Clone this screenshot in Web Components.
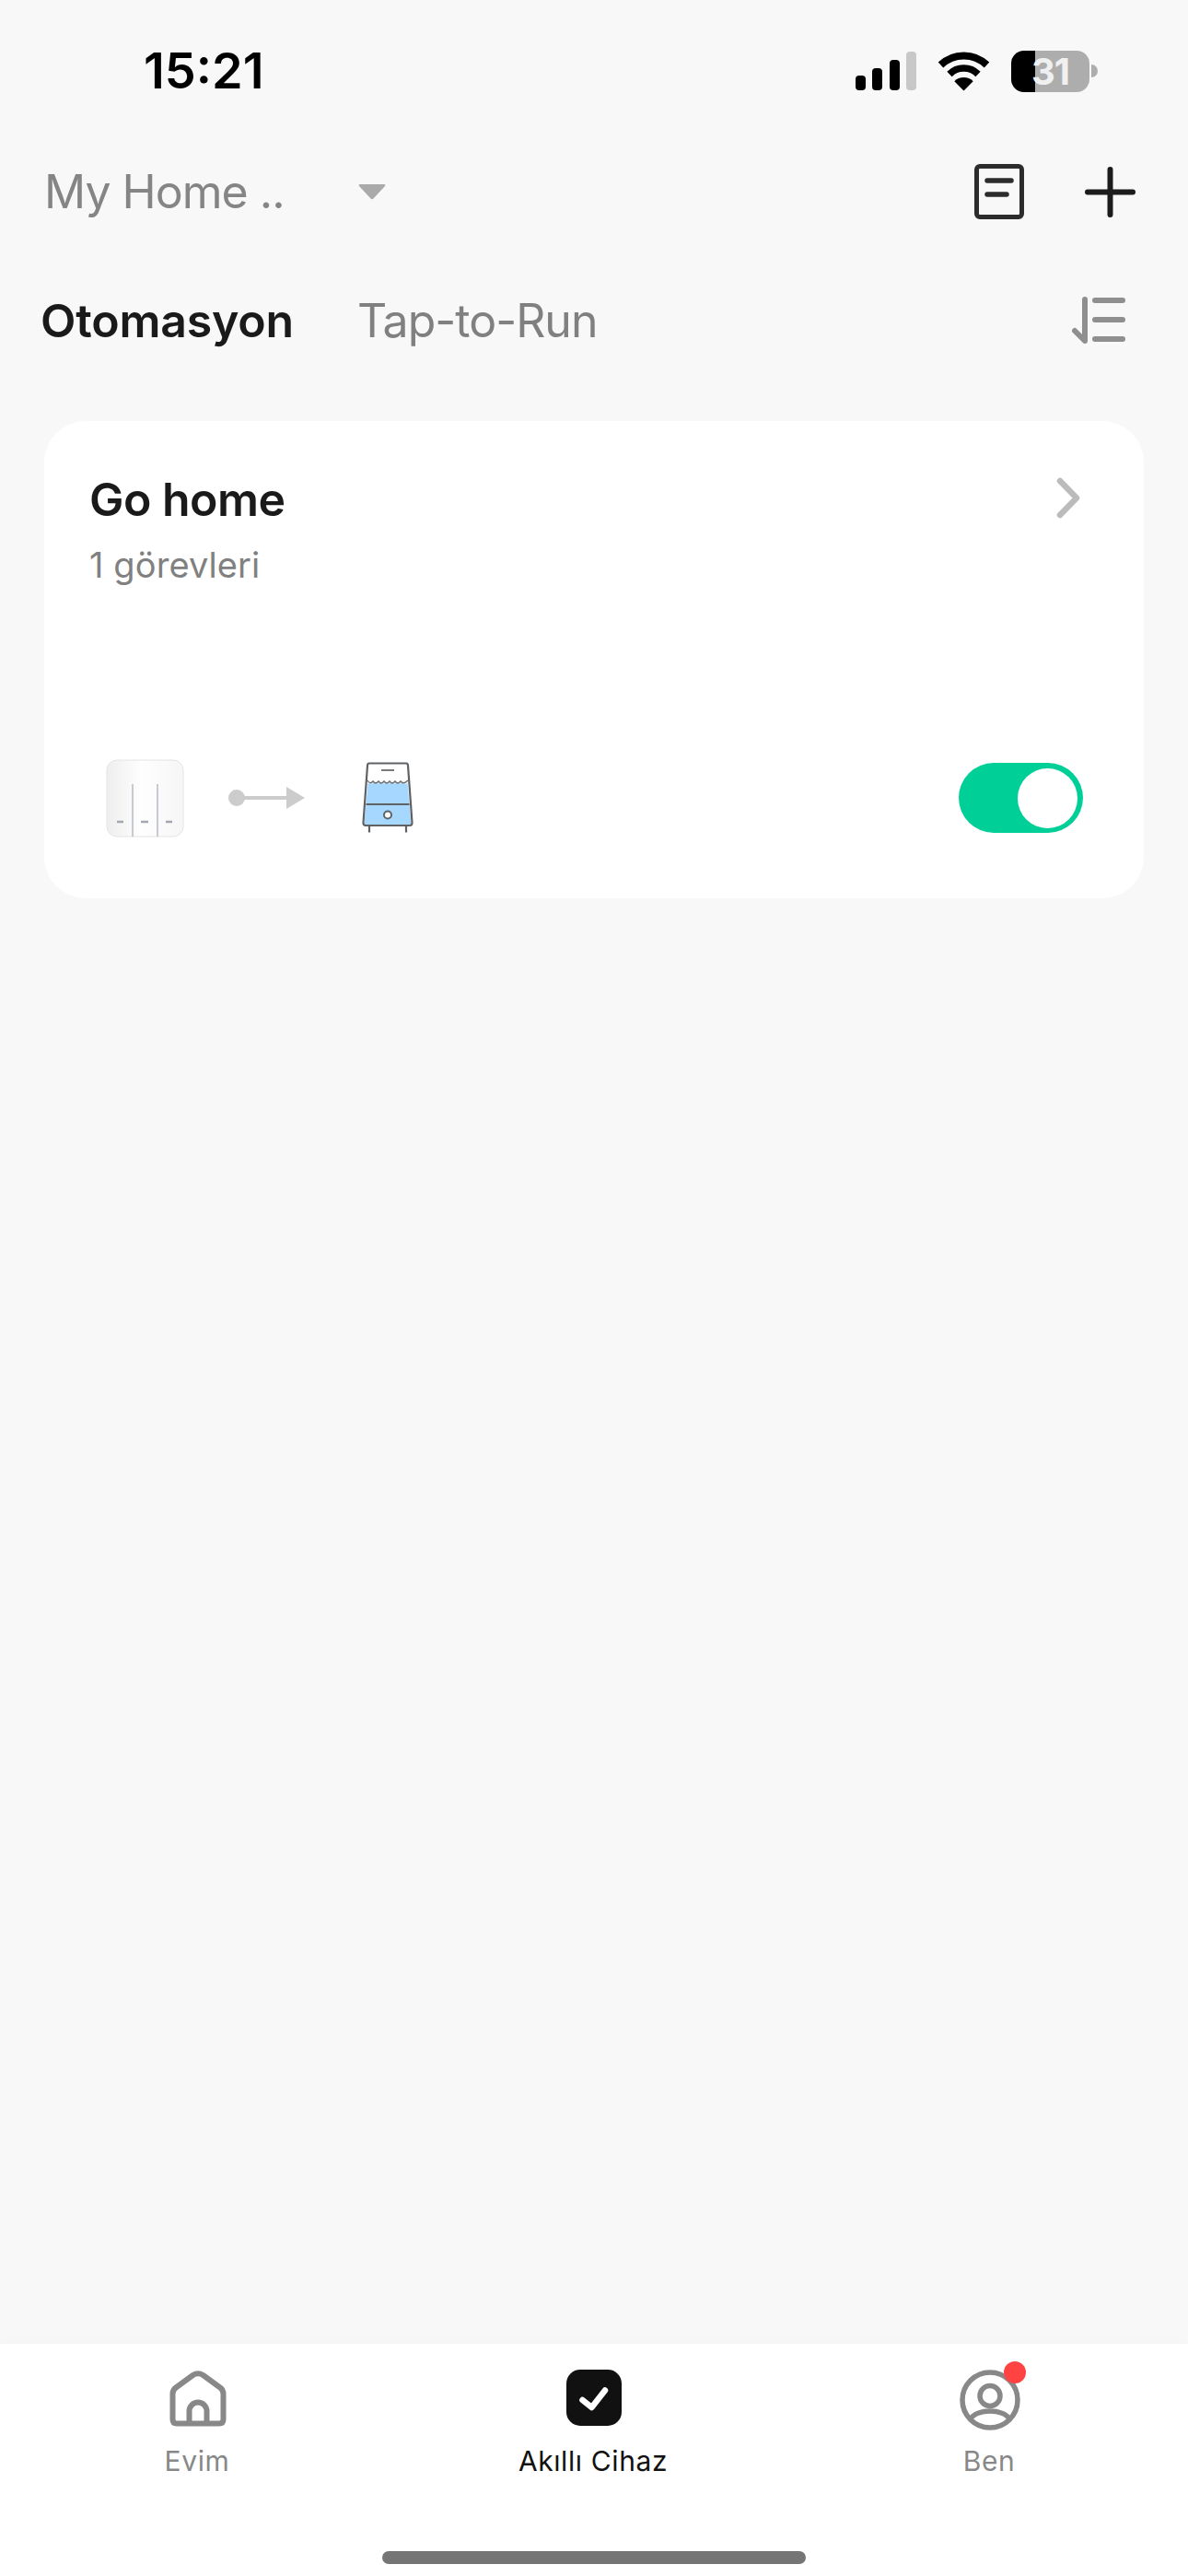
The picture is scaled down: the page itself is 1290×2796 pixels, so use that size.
<!DOCTYPE html>
<html lang="tr">
<head>
<meta charset="utf-8">
<title>Otomasyon</title>
<style>
  html, body { margin: 0; padding: 0; background: #f8f8f8; }
  body { width: 1290px; height: 2796px; font-family: Inter, "Noto Sans", sans-serif; overflow: hidden; }
  app-shell { height: 2796px; }
</style>
</head>
<body>
<app-shell>
  <status-bar slot="top" time="15:21" level="31"></status-bar>
  <home-header slot="top" name="My Home .."></home-header>
  <scene-tabs slot="top">
    <span slot="active">Otomasyon</span>
    <span slot="other">Tap-to-Run</span>
  </scene-tabs>
  <scene-card title="Go home" sub="1 görevleri"></scene-card>
  <tab-bar slot="bottom">
    <tab-item label="Evim" icon="home"></tab-item>
    <tab-item label="Akıllı Cihaz" icon="check" active></tab-item>
    <tab-item label="Ben" icon="user" badge></tab-item>
  </tab-bar>
</app-shell>

<script>
  class AppShell extends HTMLElement {
    constructor() {
      super();
      this.attachShadow({ mode: 'open' });
      this.shadowRoot.innerHTML = `
        <style>
          :host { display: flex; flex-direction: column; color: #1a1a1a; }
          main { flex: 1; padding: 23px 48px 0; }
        </style>
        <slot name="top"></slot>
        <main><slot></slot></main>
        <slot name="bottom"></slot>
      `;
    }
  }

  class StatusBar extends HTMLElement {
    constructor() {
      super();
      this.attachShadow({ mode: 'open' });
      this.shadowRoot.innerHTML = `
        <style>
          :host { display: flex; align-items: center; height: 154px; padding: 0 98px 0 156px; justify-content: space-between; }
          .time { font: 600 54px/1 Inter, sans-serif; color: #000; }
          .right { display: flex; align-items: center; gap: 23px; }
          svg { display: block; }
          .batt { display: flex; align-items: center; gap: 2px; }
          .body {
            width: 85px; height: 45px; border-radius: 14px; box-sizing: border-box;
            background: linear-gradient(90deg, #000 0 26px, #adadad 26px);
            color: #f0f0f0; font: 700 40px/45px Inter, sans-serif; text-align: center; letter-spacing: -1px;
          }
          .nub { width: 7px; height: 14px; background: #adadad; border-radius: 0 7px 7px 0; }
        </style>
        <div class="time"></div>
        <div class="right">
          <svg width="66" height="42" viewBox="0 0 66 42">
            <rect x="0" y="26" width="11" height="16" rx="4" fill="#000"/>
            <rect x="18" y="18" width="11" height="24" rx="4" fill="#000"/>
            <rect x="37" y="9" width="11" height="33" rx="4" fill="#000"/>
            <rect x="55" y="0" width="11" height="42" rx="4" fill="#c8c8c8"/>
          </svg>
          <svg width="57" height="44" viewBox="0 0 57 44">
            <path d="M28.5 43.5 L18.3 33.3 A14.5 14.5 0 0 1 38.7 33.3 Z" fill="#000"/>
            <path d="M13 25.5 A22 22 0 0 1 44 25.5" fill="none" stroke="#000" stroke-width="7.5"/>
            <path d="M3.5 15.5 A36 36 0 0 1 53.5 15.5" fill="none" stroke="#000" stroke-width="8"/>
          </svg>
          <div class="batt"><div class="body"></div><div class="nub"></div></div>
        </div>
      `;
      this.shadowRoot.querySelector('.time').textContent = this.getAttribute('time');
      this.shadowRoot.querySelector('.body').textContent = this.getAttribute('level');
    }
  }

  class HomeHeader extends HTMLElement {
    constructor() {
      super();
      this.attachShadow({ mode: 'open' });
      this.shadowRoot.innerHTML = `
        <style>
          :host { display: flex; align-items: center; height: 108px; padding: 0 57px 0 48px; }
          .name { font: 400 50px/1 Inter, sans-serif; color: #858585; width: 341px; white-space: nowrap; letter-spacing: -1px; }
          .caret { flex: 1; }
          svg { display: block; }
          .plus { margin-left: 66px; }
        </style>
        <div class="name"></div>
        <div class="caret">
          <svg width="30" height="18" viewBox="0 0 30 18"><path d="M2 1 H28 Q30 1 29 3 L16.5 16.5 Q15 18 13.5 16.5 L1 3 Q0 1 2 1 Z" fill="#aaa"/></svg>
        </div>
        <svg width="54" height="60" viewBox="0 0 54 60" fill="none" stroke="#2c2c2c">
          <rect x="2.5" y="2.5" width="49" height="55" rx="3.5" stroke-width="5"/>
          <path d="M14 18 H40 M14 33 H35" stroke-width="5.5" stroke-linecap="round"/>
        </svg>
        <svg class="plus" width="55" height="55" viewBox="0 0 55 55" fill="none" stroke="#1c1c1c" stroke-width="6" stroke-linecap="round">
          <path d="M3 27.5 H52 M27.5 3 V52"/>
        </svg>
      `;
      this.shadowRoot.querySelector('.name').textContent = this.getAttribute('name');
    }
  }

  class SceneTabs extends HTMLElement {
    constructor() {
      super();
      this.attachShadow({ mode: 'open' });
      this.shadowRoot.innerHTML = `
        <style>
          :host { display: flex; align-items: center; height: 172px; padding: 0 68px 0 44px; }
          .active { font: 600 50px/1 Inter, sans-serif; color: #1a1a1a; letter-spacing: -.2px; width: 344px; white-space: nowrap; }
          .other { font: 400 50px/1 Inter, sans-serif; color: #808080; letter-spacing: -1px; flex: 1; white-space: nowrap; }
          svg { display: block; }
        </style>
        <div class="active"><slot name="active"></slot></div>
        <div class="other"><slot name="other"></slot></div>
        <svg width="58" height="52" viewBox="0 0 58 52" fill="none" stroke="#8f8f8f" stroke-width="6" stroke-linecap="round" stroke-linejoin="round">
          <path d="M14 3 V48 L3 37"/>
          <path d="M25 4 H55 M25 25 H55 M25 46 H55"/>
        </svg>
      `;
    }
  }

  class SceneCard extends HTMLElement {
    constructor() {
      super();
      this.attachShadow({ mode: 'open' });
      this.shadowRoot.innerHTML = `
        <style>
          :host { display: flex; flex-direction: column; justify-content: space-between; box-sizing: border-box; height: 518px; background: #fff; border-radius: 45px; padding: 56px 64px 65px 49px; }
          .top { display: flex; justify-content: space-between; }
          .title { font: 600 50px/58px Inter, sans-serif; color: #1a1a1a; letter-spacing: -.5px; }
          .sub { font: 400 38px/44px Inter, sans-serif; color: #808080; margin-top: 20px; letter-spacing: .1px; }
          .chev { margin-top: 5px; margin-right: 5px; }
          .bottom { display: flex; align-items: center; justify-content: space-between; padding-left: 18px; padding-right: 2px; }
          .flow { display: flex; align-items: center; }
          .switch { margin-top: 2px; }
          .arrow { margin-left: 48px; margin-right: 62px; }
          svg { display: block; }
        </style>
        <div class="top">
          <div>
            <div class="title"></div>
            <div class="sub"></div>
          </div>
          <svg class="chev" width="26" height="45" viewBox="0 0 26 45" fill="none" stroke="#bbb" stroke-width="6.5" stroke-linecap="round" stroke-linejoin="round">
            <path d="M4 4 L22 22.5 L4 41"/>
          </svg>
        </div>
        <div class="bottom">
          <div class="flow">
            <svg class="switch" width="85" height="86" viewBox="0 0 85 86">
              <defs>
                <linearGradient id="sw" x1="0" y1="0" x2="1" y2="0">
                  <stop offset="0" stop-color="#eeeeee"/>
                  <stop offset=".45" stop-color="#fefefe"/>
                  <stop offset="1" stop-color="#f6f6f6"/>
                </linearGradient>
              </defs>
              <rect x="1" y="1" width="83" height="83" rx="11" fill="url(#sw)" stroke="#e4e4e4"/>
              <path d="M29 27 V84 M56 27 V84" stroke="#b4bbc6" stroke-width="1.5"/>
              <path d="M12 68 H19 M38 68 H46 M65 68 H72" stroke="#a3a7ae" stroke-width="2.5"/>
            </svg>
            <svg class="arrow" width="83" height="24" viewBox="0 0 83 24" fill="#ccc">
              <circle cx="9" cy="12" r="9"/>
              <rect x="9" y="10" width="56" height="4"/>
              <path d="M63 0 L83 12 L63 24 Z"/>
            </svg>
            <svg width="56" height="78" viewBox="0 0 56 78" fill="none">
              <path d="M2.5 68 L6.5 23 Q11 25 14 22 Q17 25 20 22 Q23 25 26 22 Q29 25 32 22 Q35 25 38 22 Q41 25 44 22 Q47 25 49.5 23 L53.5 68 Z" fill="#a6d8ff"/>
              <path d="M8 1.5 H48 Q50 1.5 50 4 L54.5 66 Q54.5 69 52 69 H4 Q1.5 69 1.5 66 L6 4 Q6 1.5 8 1.5 Z M4.5 46 H51.5 M8 76.5 V69 M48 76.5 V69" stroke="#5f6265" stroke-width="2.2"/>
              <path d="M21 9 H35" stroke="#77797b" stroke-width="2"/>
              <path d="M6 20 Q9 25 12 21 Q15 25 18 21 Q21 25 24 21 Q27 25 30 21 Q33 25 36 21 Q39 25 42 21 Q45 25 50 20" stroke="#6d7073" stroke-width="1.4"/>
              <circle cx="28" cy="57.5" r="4" fill="#fff" stroke="#5f6265" stroke-width="2"/>
            </svg>
          </div>
          <toggle-switch></toggle-switch>
        </div>
      `;
      this.shadowRoot.querySelector('.title').textContent = this.getAttribute('title');
      this.shadowRoot.querySelector('.sub').textContent = this.getAttribute('sub');
    }
  }

  class ToggleSwitch extends HTMLElement {
    constructor() {
      super();
      this.attachShadow({ mode: 'open' });
      this.shadowRoot.innerHTML = `
        <style>
          :host { display: flex; justify-content: flex-end; align-items: center; box-sizing: border-box; width: 135px; height: 76px; padding: 0 6px; background: #00cf98; border-radius: 38px; }
          i { display: block; width: 65px; height: 65px; border-radius: 50%; background: #fff; }
        </style>
        <i></i>
      `;
    }
  }

  class TabBar extends HTMLElement {
    constructor() {
      super();
      this.attachShadow({ mode: 'open' });
      this.shadowRoot.innerHTML = `
        <style>
          :host { display: block; box-sizing: border-box; height: 252px; background: #fff; box-shadow: 0 -5px 12px rgba(0,0,0,.012); padding-top: 28px; }
          .items { display: grid; grid-template-columns: repeat(3, 1fr); }
          .home-line { width: 460px; height: 14px; border-radius: 7px; background: #757575; margin: 80px auto 0; }
        </style>
        <div class="items"><slot></slot></div>
        <div class="home-line"></div>
      `;
    }
  }

  const TAB_ICONS = {
    home: `<svg width="62" height="62" viewBox="0 0 62 62" fill="none" stroke="#888" stroke-width="6" stroke-linejoin="round">
        <path d="M25.5 6 L7 19.5 Q3.5 22 3.5 26.5 V54 Q3.5 58.5 8 58.5 H54 Q58.5 58.5 58.5 54 V26.5 Q58.5 22 55 19.5 L36.5 6 Q31 2.5 25.5 6 Z"/>
        <path d="M21.5 58 V45 A9.5 9.5 0 0 1 40.5 45 V58"/>
      </svg>`,
    check: `<svg width="60" height="62" viewBox="0 0 60 62">
        <rect x="0" y="0" width="60" height="61" rx="15" fill="#111"/>
        <path d="M17.5 33 L27.5 41 L42 22.5" fill="none" stroke="#fff" stroke-width="6.5" stroke-linecap="round" stroke-linejoin="round"/>
      </svg>`,
    user: `<svg width="66" height="66" viewBox="0 0 66 66" fill="none" stroke="#888" stroke-width="5.5">
        <circle cx="33" cy="33" r="30"/>
        <circle cx="33" cy="28.5" r="11"/>
        <path d="M11.5 54 C18 42 48 42 54.5 54"/>
      </svg>`
  };

  class TabItem extends HTMLElement {
    constructor() {
      super();
      this.attachShadow({ mode: 'open' });
      const color = this.hasAttribute('active') ? '#111' : '#888';
      this.shadowRoot.innerHTML = `
        <style>
          :host { display: flex; flex-direction: column; align-items: center; }
          .icon { position: relative; height: 66px; display: flex; align-items: flex-start; }
          .dot { position: absolute; right: -6px; top: -9px; width: 24px; height: 24px; border-radius: 50%; background: #ff4343; }
          .label { font: 400 30px/36px Inter, sans-serif; color: ${color}; margin-top: 15px; letter-spacing: .6px; white-space: nowrap; margin-left: -2px; }
          svg { display: block; }
        </style>
        <div class="icon">${TAB_ICONS[this.getAttribute('icon')]}${this.hasAttribute('badge') ? '<span class="dot"></span>' : ''}</div>
        <div class="label"></div>
      `;
      this.shadowRoot.querySelector('.label').textContent = this.getAttribute('label');
    }
  }

  customElements.define('app-shell', AppShell);
  customElements.define('status-bar', StatusBar);
  customElements.define('home-header', HomeHeader);
  customElements.define('scene-tabs', SceneTabs);
  customElements.define('toggle-switch', ToggleSwitch);
  customElements.define('scene-card', SceneCard);
  customElements.define('tab-bar', TabBar);
  customElements.define('tab-item', TabItem);
</script>
</body>
</html>
